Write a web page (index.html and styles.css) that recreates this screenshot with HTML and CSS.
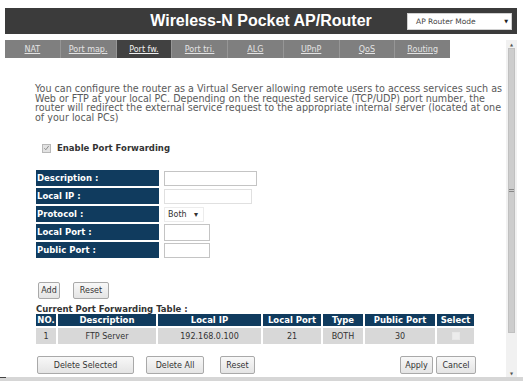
FILE: index.html
```html
<!DOCTYPE html>
<html>
<head>
<meta charset="utf-8">
<link rel="stylesheet" href="styles.css">
</head>
<body>
<div class="page">
  <header class="topbar">
    <div class="title">Wireless-N Pocket AP/Router</div>
    <div class="mode-select"><span>AP Router Mode</span><span class="caret">▼</span></div>
  </header>
  <div class="body-row">
    <main class="content">
      <nav class="tabs">
        <a class="tab">NAT</a>
        <a class="tab">Port map.</a>
        <a class="tab active">Port fw.</a>
        <a class="tab">Port tri.</a>
        <a class="tab">ALG</a>
        <a class="tab">UPnP</a>
        <a class="tab">QoS</a>
        <a class="tab">Routing</a>
      </nav>
      <p class="intro">You can configure the router as a Virtual Server allowing remote users to access services such as<br>Web or FTP at your local PC. Depending on the requested service (TCP/UDP) port number, the<br>router will redirect the external service request to the appropriate internal server (located at one<br>of your local PCs)</p>
      <div class="enable">
        <span class="check"><svg width="8" height="8" viewBox="0 0 8 8"><path d="M1.5 4.2 L3.2 6 L6.6 1.6" fill="none" stroke="#8a8a8a" stroke-width="1.1"/></svg></span>
        <span class="enable-text">Enable Port Forwarding</span>
      </div>
      <div class="form">
        <div class="label">Description :</div>
        <div class="field"><span class="input w-desc"></span></div>
        <div class="label">Local IP :</div>
        <div class="field"><span class="input w-ip faint"></span></div>
        <div class="label">Protocol :</div>
        <div class="field"><span class="proto">Both <span class="pcaret">▾</span></span></div>
        <div class="label">Local Port :</div>
        <div class="field"><span class="input w-port tall"></span></div>
        <div class="label">Public Port :</div>
        <div class="field"><span class="input w-port"></span></div>
      </div>
      <div class="form-buttons">
        <span class="btn b-add">Add</span>
        <span class="btn b-reset">Reset</span>
      </div>
      <div class="table-title">Current Port Forwarding Table :</div>
      <table class="list">
        <tr class="head">
          <th class="c-no">NO.</th>
          <th class="c-desc">Description</th>
          <th class="c-ip">Local IP</th>
          <th class="c-lp">Local Port</th>
          <th class="c-type">Type</th>
          <th class="c-pp">Public Port</th>
          <th class="c-sel">Select</th>
        </tr>
        <tr class="data">
          <td>1</td>
          <td>FTP Server</td>
          <td>192.168.0.100</td>
          <td>21</td>
          <td>BOTH</td>
          <td>30</td>
          <td><span class="sel-box"></span></td>
        </tr>
      </table>
      <div class="actions">
        <span class="btn b-delsel">Delete Selected</span>
        <span class="btn b-delall">Delete All</span>
        <span class="btn b-reset2">Reset</span>
        <span class="spacer"></span>
        <span class="btn b-apply">Apply</span>
        <span class="btn b-cancel">Cancel</span>
      </div>
    </main>
    <div class="scrollbar">
      <div class="arrow">▲</div>
      <div class="thumb"><span class="grip"></span></div>
      <div class="track-rest"></div>
      <div class="arrow">▼</div>
    </div>
  </div>
  <div class="bottom-edge"><span class="dash"></span></div>
</div>
</body>
</html>
```
FILE: styles.css
```css
* { box-sizing: border-box; }
html, body { margin: 0; padding: 0; background: #fff; }
body { width: 523px; height: 381px; overflow: hidden; font-family: "DejaVu Sans", Verdana, sans-serif; color: #444; }
.page { display: flex; flex-direction: column; height: 381px; padding-top: 8px; }

.topbar {
  margin-left: 5px; width: 512px; height: 26px; background: #3b3b3b;
  display: grid; grid-template-columns: 1fr auto 1fr; align-items: center;
}
.title {
  grid-column: 2; font-family: "Liberation Sans", Arial, sans-serif; font-weight: bold;
  font-size: 16px; color: #fff; letter-spacing: 0;
}
.mode-select {
  grid-column: 3; justify-self: end; margin-right: 5px; width: 105px; height: 17px;
  background: #fff; border: 1px solid #d0d0d0; display: flex; align-items: center;
  justify-content: space-between; padding: 0 3px 0 8px; font-size: 7.5px; color: #444;
}
.mode-select .caret { font-size: 5px; color: #222; }

.body-row { display: flex; margin-top: 6px; height: 337px; padding-left: 5px; }
.content { width: 501px; flex: none; }

.tabs { display: flex; width: 445px; height: 18px; background: #7f7f7f; }
.tab {
  flex: 1; display: flex; align-items: center; justify-content: center;
  font-size: 8px; color: #e4e4e4; text-decoration: underline; border-left: 1px solid #969696;
}
.tab:first-child { border-left: none; }
.tab.active { background: #414141; color: #f0f0f0; }

.intro {
  margin: 26px 0 0 30px; width: 471px; white-space: nowrap; font-size: 9.6px; line-height: 9.6px; color: #5a5a5a;
}
.enable { display: flex; align-items: center; margin: 20px 0 0 37px; height: 12px; }
.check {
  width: 9px; height: 9px; background: #e2e2e2; border: 1px solid #b8b8b8;
  display: flex; align-items: center; justify-content: center;
}
.enable-text { margin-left: 6px; font-size: 8.5px; font-weight: bold; color: #333; }

.form {
  display: grid; grid-template-columns: 123px auto; column-gap: 5px; row-gap: 2px;
  margin: 16px 0 0 31px; grid-auto-rows: 16px;
}
.label {
  background: #103b5e; color: #fff; font-weight: bold; font-size: 8.5px;
  display: flex; align-items: center; padding-left: 1px;
}
.field { display: flex; align-items: center; }
.input { display: block; height: 15px; border: 1px solid #c4c4c4; background: #fff; }
.input.faint { border-color: #e0e0e0; }
.input.tall { height: 17px; }
.w-desc { width: 93px; }
.w-ip { width: 88px; }
.w-port { width: 46px; }
.proto {
  display: flex; align-items: center; justify-content: space-between; width: 40px; height: 15px;
  font-size: 8px; color: #333; padding: 0 5px 0 3px; border: 1px solid #ececec;
}
.pcaret { font-size: 8px; }

.btn {
  display: flex; align-items: center; justify-content: center; height: 17px;
  border: 1px solid #a9a9a9; border-radius: 2px;
  background: linear-gradient(#f8f8f8, #e4e4e4); font-size: 8px; color: #333;
}
.form-buttons { display: flex; margin: 24px 0 0 33px; }
.b-add { width: 22px; }
.b-reset { width: 36px; margin-left: 13px; }

.table-title { margin: 5px 0 0 31px; font-size: 8.5px; font-weight: bold; color: #333; line-height: 10px; }
.list { border-collapse: separate; border-spacing: 2px 2px; margin-left: 29px; margin-top: -2px; table-layout: fixed; }
.list th {
  background: #103b5e; color: #fff; font-size: 8.5px; font-weight: bold; height: 12px; padding: 0; line-height: 11px;
}
.list td { background: #d8d8d8; color: #333; font-size: 8px; height: 16px; text-align: center; padding: 0; }
.c-no { width: 20px; }
.c-desc { width: 98px; }
.c-ip { width: 103px; }
.c-lp { width: 58px; }
.c-type { width: 40px; }
.c-pp { width: 70px; }
.c-sel { width: 37px; }
.sel-box { display: inline-block; width: 8px; height: 8px; border: 1px solid #e8e8e8; background: #ececec; vertical-align: middle; }

.actions { display: flex; margin: 10px 0 0 32px; width: 439px; height: 18px; }
.actions .btn { height: 18px; }
.b-delsel { width: 97px; }
.b-delall { width: 58px; margin-left: 12px; }
.b-reset2 { width: 35px; margin-left: 16px; }
.spacer { flex: 1; }
.b-apply { width: 33px; }
.b-cancel { width: 40px; margin-left: 3px; }

.scrollbar {
  width: 11px; flex: none; display: flex; flex-direction: column; background: #f1f1f1;
}
.arrow { height: 8px; font-size: 4px; color: #555; display: flex; align-items: center; justify-content: center; }
.thumb {
  height: 285px; margin: 0 2px; background: #cdcdcd; border: 1px solid #c0c0c0;
  display: flex; align-items: center; justify-content: center;
}
.grip { width: 5px; height: 3px; border-top: 1px solid #888; border-bottom: 1px solid #888; }
.track-rest { flex: 1; }

.bottom-edge { height: 4px; background: #d6d6d6; display: flex; }
.dash { width: 6px; height: 1px; background: #444; }
```
